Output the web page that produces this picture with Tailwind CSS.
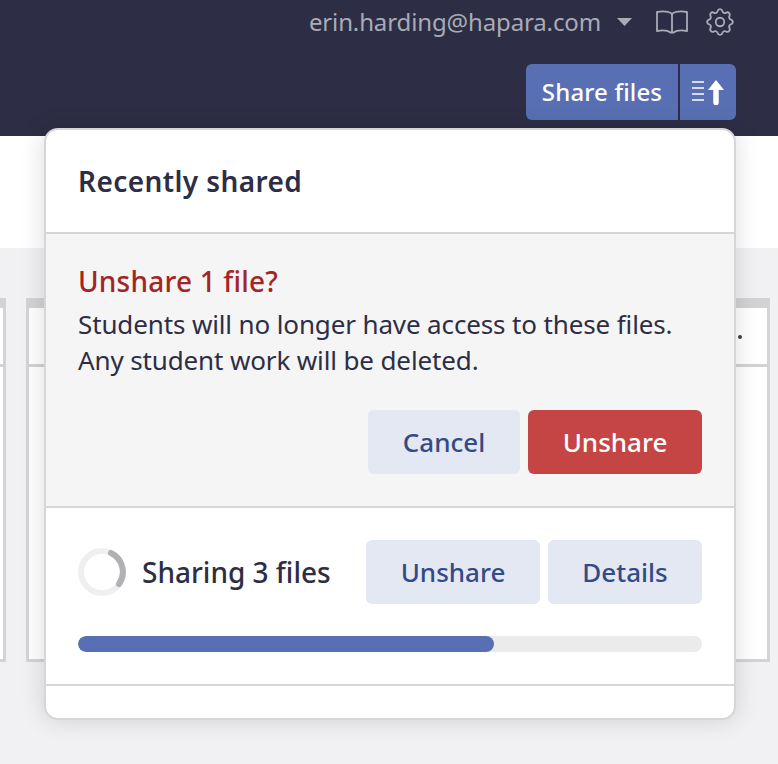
<!DOCTYPE html>
<html lang="en">

<head>
  <meta charset="UTF-8">
  <title>Recently shared</title>
  <script src="https://cdn.jsdelivr.net/npm/@tailwindcss/browser@4"></script>
</head>

<body class="relative w-[778px] h-[764px] overflow-hidden bg-[#f1f1f4] font-['Noto_Sans',sans-serif] text-[#2d2e45]">

  <!-- Top bar -->
  <header class="h-[136px] bg-[#2d2e45] flex flex-col items-end pr-[42px]">
    <div class="h-[64px] pb-[20px] flex items-center">
      <span class="text-[24px] tracking-[-0.13px] text-[#a9abb6]">erin.harding@hapara.com</span>
      <svg class="ml-[16px]" width="16" height="8" viewBox="0 0 16 8"><path d="M0 0H15L7.500 8Z" fill="#a9abb6"/></svg>
      <svg class="ml-[22px]" width="34" height="26" viewBox="0 0 34 26" fill="none" stroke="#a9abb6" stroke-width="1.800" stroke-linejoin="round"><path d="M17 5C14 2.500 8 2 2 3V22C8 21 13 21.500 15.500 23.500H18.500C21 21.500 26 21 32 22V3C26 2 20 2.500 17 5ZM17 5V23"/></svg>
      <svg class="ml-[14px] mr-[-1px]" width="34" height="34" viewBox="0 0 24 24" fill="none" stroke="#a9abb6" stroke-width="1.300" stroke-linecap="round" stroke-linejoin="round"><path d="M10.300 4.300c.4-1.800 3-1.800 3.400 0a1.700 1.700 0 0 0 2.600 1.100c1.500-.9 3.300.8 2.400 2.400a1.700 1.700 0 0 0 1 2.500c1.800.4 1.800 3 0 3.400a1.700 1.700 0 0 0-1 2.600c.9 1.500-.9 3.300-2.400 2.400a1.700 1.700 0 0 0-2.600 1c-.4 1.800-3 1.800-3.400 0a1.700 1.700 0 0 0-2.600-1c-1.500.9-3.300-.9-2.400-2.400a1.700 1.700 0 0 0-1-2.600c-1.800-.4-1.800-3 0-3.400a1.700 1.700 0 0 0 1-2.500c-.9-1.600.9-3.300 2.400-2.400a1.700 1.700 0 0 0 2.600-1.100Z"/><circle cx="12" cy="12" r="3"/></svg>
    </div>
    <div class="flex h-[56px] rounded-[6px] overflow-hidden bg-[#5870b3] text-white">
      <div class="w-[154px] flex items-center justify-center text-[24px] tracking-[0.15px] font-medium border-r-2 border-[#2d2e45]">Share files</div>
      <div class="w-[56px] flex items-center justify-center">
        <svg width="34" height="26" viewBox="0 0 34 26" fill="none" stroke="#fff"><path d="M1 3H13M1 9H13M1 15H13M1 21H13" stroke-width="1.600"/><path d="M25 23.500V8" stroke-width="5.500" stroke-linecap="round"/><path d="M17 11L25 1L33 11Z" fill="#fff" stroke="none"/></svg>
      </div>
    </div>
  </header>

  <div class="h-[112px] bg-white"></div>

  <!-- Panels behind the popover -->
  <div class="flex gap-[20px] mt-[50px] h-[364px] ml-[-100px] pr-[8px]">
    <div class="w-[106px] border-[3px] border-t-[10px] border-[#d3d3d5] bg-white">
      <div class="h-[59px] border-b-[3px] border-[#d3d3d5]"></div>
    </div>
    <div class="flex-1 border-[3px] border-t-[10px] border-[#d3d3d5] bg-white">
      <div class="h-[59px] border-b-[3px] border-[#d3d3d5]"></div>
    </div>
  </div>
  <span class="absolute left-[738px] top-[335px] w-[4px] h-[4px] rounded-full bg-[#3f4050]"></span>

  <!-- Popover -->
  <section class="absolute left-[44px] top-[128px] w-[692px] h-[592px] bg-white rounded-[14px] border-2 border-[#d6d6d8] shadow-[0_0_24px_rgba(0,0,0,0.14)] overflow-hidden">
    <h2 class="h-[104px] pl-[32px] pt-[33px] text-[28px] leading-[36px] tracking-[0.4px] font-semibold border-b-2 border-[#d6d6d8]">Recently shared</h2>

    <div class="h-[274px] bg-[#f5f5f5] border-b-2 border-[#d6d6d8] px-[32px] pt-[29px]">
      <h3 class="text-[28px] leading-[36px] tracking-[0.2px] font-medium text-[#a32626]">Unshare 1 file?</h3>
      <p class="mt-[7px] text-[26px] leading-[36px] tracking-[-0.13px]">Students will no longer have access to these files.<br>Any student work will be deleted.</p>
      <div class="flex justify-end gap-[8px] mt-[32px]">
        <button class="w-[152px] h-[64px] rounded-[6px] bg-[#e4e8f2] text-[#344a86] text-[26px] font-medium">Cancel</button>
        <button class="w-[174px] h-[64px] rounded-[6px] bg-[#c54444] text-white text-[26px] font-medium">Unshare</button>
      </div>
    </div>

    <div class="h-[178px] border-b-2 border-[#d6d6d8] px-[32px] pt-[32px]">
      <div class="flex items-center">
        <svg width="48" height="48" viewBox="0 0 48 48" fill="none"><circle cx="24" cy="24" r="21" stroke="#efeff0" stroke-width="6"/><path d="M33 5A21 21 0 0 1 41 36" stroke="#b0b1b4" stroke-width="6" stroke-linecap="round"/></svg>
        <span class="ml-[16px] text-[28px] font-medium">Sharing 3 files</span>
        <div class="ml-auto flex gap-[8px]">
          <button class="w-[174px] h-[64px] rounded-[6px] bg-[#e4e8f2] text-[#344a86] text-[26px] font-medium">Unshare</button>
          <button class="w-[154px] h-[64px] rounded-[6px] bg-[#e4e8f2] text-[#344a86] text-[26px] font-medium">Details</button>
        </div>
      </div>
      <div class="mt-[32px] h-[16px] rounded-full bg-[#ebebeb] overflow-hidden">
        <div class="h-full rounded-full bg-[#5870b3]" style="width: 66.700%"></div>
      </div>
    </div>
  </section>

</body>

</html>
